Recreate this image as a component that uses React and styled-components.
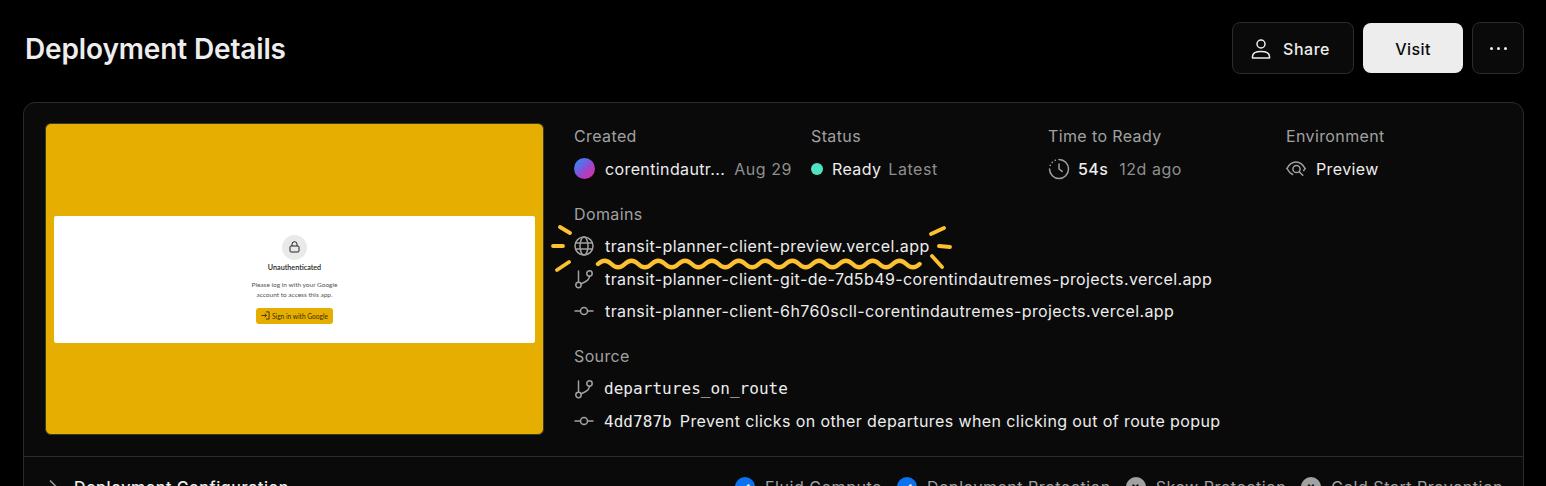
import styled, { createGlobalStyle } from "styled-components"

const Global = createGlobalStyle`
  html, body {
    margin: 0;
    height: 100%;
    overflow: hidden;
    background: #000;
  }
  body {
    font-family: Inter, "Liberation Sans", sans-serif;
    color: #ededed;
  }
  * {
    box-sizing: border-box;
  }
`

const IconUser = () => (
  <svg width="20" height="20" viewBox="0 0 20 20" fill="none" stroke="#ededed" strokeWidth="1.5">
    <circle cx="10" cy="5" r="4" />
    <path d="M1.5 19h17v-1.5c0-3-3-5-8.5-5s-8.5 2-8.5 5z" strokeLinejoin="round" />
  </svg>
)

const IconClock = () => (
  <svg width="22" height="22" viewBox="0 0 22 22" fill="none" stroke="#a1a1a1" strokeWidth="1.5" strokeLinecap="round">
    <path d="M11 1.5a9.5 9.5 0 1 1-9.5 9.5" />
    <path d="M2.2 7.4l.1-.2M4.2 4.4l.2-.2M7.2 2.3l.2-.1" />
    <path d="M11 6v5l3.2 2.4" strokeLinejoin="round" />
  </svg>
)

const IconEye = () => (
  <svg width="20" height="20" viewBox="0 0 20 20" fill="none" stroke="#a1a1a1" strokeWidth="1.5" strokeLinecap="round" strokeLinejoin="round">
    <path d="M1 9.5C3.2 5.2 6.2 3 10 3s6.8 2.2 9 6.5" />
    <path d="M1 9.5c1.6 3 3.4 5 5.6 6" />
    <circle cx="10.5" cy="10" r="3.6" />
    <path d="M13.2 12.7l3.6 3.6" />
    <path d="M19 9.5c-.4.8-.8 1.4-1.3 2" />
  </svg>
)

const IconGlobe = () => (
  <svg width="20" height="20" viewBox="0 0 20 20" fill="none" stroke="#a1a1a1" strokeWidth="1.5">
    <circle cx="10" cy="10" r="9" />
    <ellipse cx="10" cy="10" rx="4" ry="9" />
    <path d="M1.5 7h17M1.5 13h17" />
  </svg>
)

const IconBranch = () => (
  <svg width="20" height="20" viewBox="0 0 20 20" fill="none" stroke="#a1a1a1" strokeWidth="1.5" strokeLinecap="round">
    <circle cx="4.5" cy="16" r="2.7" />
    <circle cx="15.5" cy="4.5" r="2.7" />
    <path d="M4.5 13.2V2M15.5 7.3c0 4.5-5 6-8.5 7.6" />
  </svg>
)

const IconCommit = () => (
  <svg width="20" height="20" viewBox="0 0 20 20" fill="none" stroke="#a1a1a1" strokeWidth="1.5" strokeLinecap="round">
    <circle cx="10" cy="10" r="3.5" />
    <path d="M1 10h5.5M13.5 10H19" />
  </svg>
)

const IconLock = () => (
  <svg width="11" height="12" viewBox="0 0 11 12" fill="none" stroke="#222" strokeWidth="1">
    <rect x="1" y="5" width="9" height="6" rx="1" />
    <path d="M3 5V3.2a2.5 2.5 0 0 1 5 0V5" />
  </svg>
)

const IconSignIn = () => (
  <svg width="9" height="9" viewBox="0 0 10 10" fill="none" stroke="#3a2c00" strokeWidth="1">
    <path d="M5.5 1H9v8H5.5M0.5 5H6M4.2 3l2 2-2 2" />
  </svg>
)

// hand drawn highlight round the first domain
const Scribble = () => (
  <ScribbleSvg width="410" height="60" viewBox="0 0 410 60" fill="none" stroke="#fdc02f" strokeWidth="3.8" strokeLinecap="round">
    <path d="M8 4l10 6M1 23h10M5 47l12-8" />
    <path d="M379 11l13-6M387 23l11 1M380 33l10 11" />
    <path d={`M46 41q6.7 -6.5 13.4 0${"t13.4 0".repeat(23)}`} strokeWidth="4.4" />
  </ScribbleSvg>
)

const features = [
  { label: "Fluid Compute", on: true },
  { label: "Deployment Protection", on: true },
  { label: "Skew Protection", on: false },
  { label: "Cold Start Prevention", on: false },
]

export default function App() {
  const columns = [
    { label: "Created", icon: <AvatarCircle />, value: "corentindautr...", muted: "Aug 29", gap: 9, iconWidth: 31 },
    { label: "Status", icon: <StatusDot />, value: "Ready", muted: "Latest", gap: 7, iconWidth: 21 },
    { label: "Time to Ready", icon: <IconClock />, value: "54s", muted: "12d ago", gap: 11, iconWidth: 30, medium: true },
    { label: "Environment", icon: <IconEye />, value: "Preview", iconWidth: 30 },
  ]

  return (
    <Page>
      <Global />
      <Header>
        <Title>Deployment Details</Title>
        <Actions>
          <GhostButton>
            <IconUser />
            Share
          </GhostButton>
          <VisitButton>Visit</VisitButton>
          <MoreButton aria-label="More">
            <MoreDot />
            <MoreDot />
            <MoreDot />
          </MoreButton>
        </Actions>
      </Header>

      <Card>
        <CardBody>
          <Thumb>
            <ThumbSheet>
              <LockBadge>
                <IconLock />
              </LockBadge>
              <ThumbTitle>Unauthenticated</ThumbTitle>
              <ThumbText>
                Please log in with your Google
                <br />
                account to access this app.
              </ThumbText>
              <ThumbButton>
                <IconSignIn />
                Sign in with Google
              </ThumbButton>
            </ThumbSheet>
          </Thumb>

          <Meta>
            <MetaGrid>
              {columns.map((c) => (
                <div key={c.label}>
                  <Label>{c.label}</Label>
                  <ValueRow>
                    <ValueIcon $width={c.iconWidth}>{c.icon}</ValueIcon>
                    <Value $medium={c.medium}>{c.value}</Value>
                    {c.muted && <Muted $gap={c.gap}>{c.muted}</Muted>}
                  </ValueRow>
                </div>
              ))}
            </MetaGrid>

            <Section $top={23}>
              <Label>Domains</Label>
              <LinkRow $top={6}>
                <RowIcon $width={31}><IconGlobe /></RowIcon>
                <LinkText>transit-planner-client-preview.vercel.app</LinkText>
                <Scribble />
              </LinkRow>
              <LinkRow>
                <RowIcon $width={31}><IconBranch /></RowIcon>
                <LinkText>transit-planner-client-git-de-7d5b49-corentindautremes-projects.vercel.app</LinkText>
              </LinkRow>
              <LinkRow>
                <RowIcon $width={31}><IconCommit /></RowIcon>
                <LinkText>transit-planner-client-6h760scll-corentindautremes-projects.vercel.app</LinkText>
              </LinkRow>
            </Section>

            <Section $top={18}>
              <Label>Source</Label>
              <LinkRow $top={7}>
                <RowIcon><IconBranch /></RowIcon>
                <Mono>departures_on_route</Mono>
              </LinkRow>
              <LinkRow>
                <RowIcon><IconCommit /></RowIcon>
                <Mono>4dd787b</Mono>
                <CommitText>Prevent clicks on other departures when clicking out of route popup</CommitText>
              </LinkRow>
            </Section>
          </Meta>
        </CardBody>

        <ConfigRow>
          <ConfigTitle>
            <Chevron width="16" height="16" viewBox="0 0 16 16" fill="none" stroke="#a1a1a1" strokeWidth="1.5">
              <path d="M5 1.5L11.5 8 5 14.5" />
            </Chevron>
            Deployment Configuration
          </ConfigTitle>
          <Features>
            {features.map((f) => (
              <Feature key={f.label}>
                <FeatureBadge $on={f.on}>{f.on ? "✓" : "×"}</FeatureBadge>
                {f.label}
              </Feature>
            ))}
          </Features>
        </ConfigRow>
      </Card>
    </Page>
  )
}

const Page = styled.div`
  width: 1546px;
  height: 486px;
  overflow: hidden;
  padding: 22px 22px 0 23px;
`

const Header = styled.header`
  display: flex;
  align-items: center;
  justify-content: space-between;
  height: 52px;
  margin-bottom: 28px;
`

const Title = styled.h1`
  margin: 2px 0 0 2px;
  font-size: 28px;
  line-height: 36px;
  font-weight: 600;
  letter-spacing: -0.14px;
  color: #ededed;
`

const Actions = styled.div`
  display: flex;
  align-items: center;
  gap: 9px;
`

const GhostButton = styled.button`
  display: flex;
  align-items: center;
  justify-content: center;
  gap: 12px;
  width: 122px;
  height: 52px;
  padding: 1px 5px 0 0;
  border: 1px solid #2b2b2b;
  border-radius: 8px;
  background: #0a0a0a;
  color: #ededed;
  font: 500 16px Inter, sans-serif;
  letter-spacing: 0.5px;
`

const VisitButton = styled.button`
  width: 100px;
  height: 50px;
  padding: 1px 0 0;
  border: 0;
  border-radius: 8px;
  background: #ededed;
  color: #0a0a0a;
  font: 500 16px Inter, sans-serif;
  letter-spacing: 0.4px;
`

const MoreButton = styled.button`
  display: flex;
  align-items: center;
  justify-content: center;
  gap: 4px;
  width: 52px;
  height: 52px;
  padding: 0;
  border: 1px solid #2b2b2b;
  border-radius: 8px;
  background: #0a0a0a;
`

const MoreDot = styled.span`
  width: 3px;
  height: 3px;
  border-radius: 50%;
  background: #ededed;
`

const Card = styled.section`
  width: 1501px;
  height: 420px;
  border: 1px solid #2b2b2b;
  border-radius: 12px;
  background: #0a0a0a;
`

const CardBody = styled.div`
  display: flex;
  height: 354px;
  padding: 20px 0 0 21px;
  border-bottom: 1px solid #2b2b2b;
`

const Thumb = styled.div`
  display: flex;
  align-items: center;
  flex: none;
  width: 499px;
  height: 312px;
  padding: 0 8px;
  border: 1px solid #3a3a2a;
  border-radius: 6px;
  background: #e6ae00;
`

const ThumbSheet = styled.div`
  display: flex;
  flex-direction: column;
  align-items: center;
  width: 100%;
  height: 127px;
  padding-top: 19px;
  border-radius: 2px;
  background: #fff;
`

const LockBadge = styled.div`
  display: flex;
  align-items: center;
  justify-content: center;
  width: 25px;
  height: 25px;
  border-radius: 50%;
  background: #e9e9e9;
`

const ThumbTitle = styled.div`
  margin-top: 2px;
  font: 600 7.2px/12px Lato, sans-serif;
  color: #222;
`

const ThumbText = styled.div`
  margin-top: 6px;
  font: 400 6.5px/10px Lato, sans-serif;
  color: #555;
  text-align: center;
`

const ThumbButton = styled.div`
  display: flex;
  align-items: center;
  gap: 2px;
  margin-top: 8px;
  padding: 0 5px;
  height: 16px;
  border-radius: 3px;
  background: #e6ae00;
  color: #3a2c00;
  font: 400 6.6px Lato, sans-serif;
`

const Meta = styled.div`
  flex: 1;
  padding: 3px 0 0 30px;
`

const MetaGrid = styled.div`
  display: grid;
  grid-template-columns: 237px 237px 238px 1fr;
`

const Label = styled.div`
  font-size: 16px;
  line-height: 20px;
  letter-spacing: 0.38px;
  color: #a1a1a1;
`

const ValueRow = styled.div`
  display: flex;
  align-items: center;
  height: 24px;
  margin-top: 11px;
  font-size: 16px;
  letter-spacing: 0.38px;
  white-space: nowrap;
`

const ValueIcon = styled.span`
  display: flex;
  flex: none;
  width: ${(p) => p.$width}px;
`

const Value = styled.span`
  color: #ededed;
  font-weight: ${(p) => (p.$medium ? 500 : 400)};
`

const Muted = styled.span`
  margin-left: ${(p) => p.$gap}px;
  letter-spacing: 0.55px;
  color: #8f8f8f;
`

const AvatarCircle = styled.span`
  width: 21px;
  height: 21px;
  margin-top: -2px;
  border-radius: 50%;
  background: linear-gradient(135deg, #2f8cf2 10%, #8a4fd8 50%, #e02a9e 90%);
`

const StatusDot = styled.span`
  width: 12px;
  height: 12px;
  border-radius: 50%;
  background: #50e3c2;
`

const Section = styled.div`
  margin-top: ${(p) => p.$top}px;
`

const LinkRow = styled.div`
  position: relative;
  display: flex;
  align-items: center;
  height: 32.5px;
  margin-top: ${(p) => p.$top || 0}px;
  font-size: 16px;
  letter-spacing: 0.4px;
  color: #ededed;
`

const RowIcon = styled.span`
  display: flex;
  flex: none;
  width: ${(p) => p.$width || 30}px;
`

const LinkText = styled.span`
  white-space: nowrap;
`

const Mono = styled.span`
  font-family: "DejaVu Sans Mono", monospace;
  font-size: 16px;
  letter-spacing: 0.05px;
  white-space: nowrap;
`

const CommitText = styled.span`
  margin-left: 8px;
  white-space: nowrap;
`

const ScribbleSvg = styled.svg`
  position: absolute;
  left: -22px;
  top: -7px;
  overflow: visible;
`

const ConfigRow = styled.div`
  display: flex;
  align-items: center;
  justify-content: space-between;
  height: 60px;
  padding: 0 20px 0 21px;
`

const ConfigTitle = styled.div`
  display: flex;
  align-items: center;
  gap: 13px;
  font-size: 16px;
  font-weight: 500;
  letter-spacing: 0.58px;
  color: #ededed;
`

const Chevron = styled.svg`
  flex: none;
`

const Features = styled.div`
  display: flex;
  align-items: center;
  gap: 15px;
`

const Feature = styled.div`
  display: flex;
  align-items: center;
  gap: 10px;
  font-size: 16px;
  letter-spacing: 0.53px;
  color: #a1a1a1;
`

const FeatureBadge = styled.span`
  display: flex;
  align-items: center;
  justify-content: center;
  width: 20px;
  height: 20px;
  border-radius: 50%;
  background: ${(p) => (p.$on ? "#0a72ef" : "#a1a1a1")};
  color: ${(p) => (p.$on ? "#fff" : "#0a0a0a")};
  font-size: 13px;
  font-weight: 700;
`
